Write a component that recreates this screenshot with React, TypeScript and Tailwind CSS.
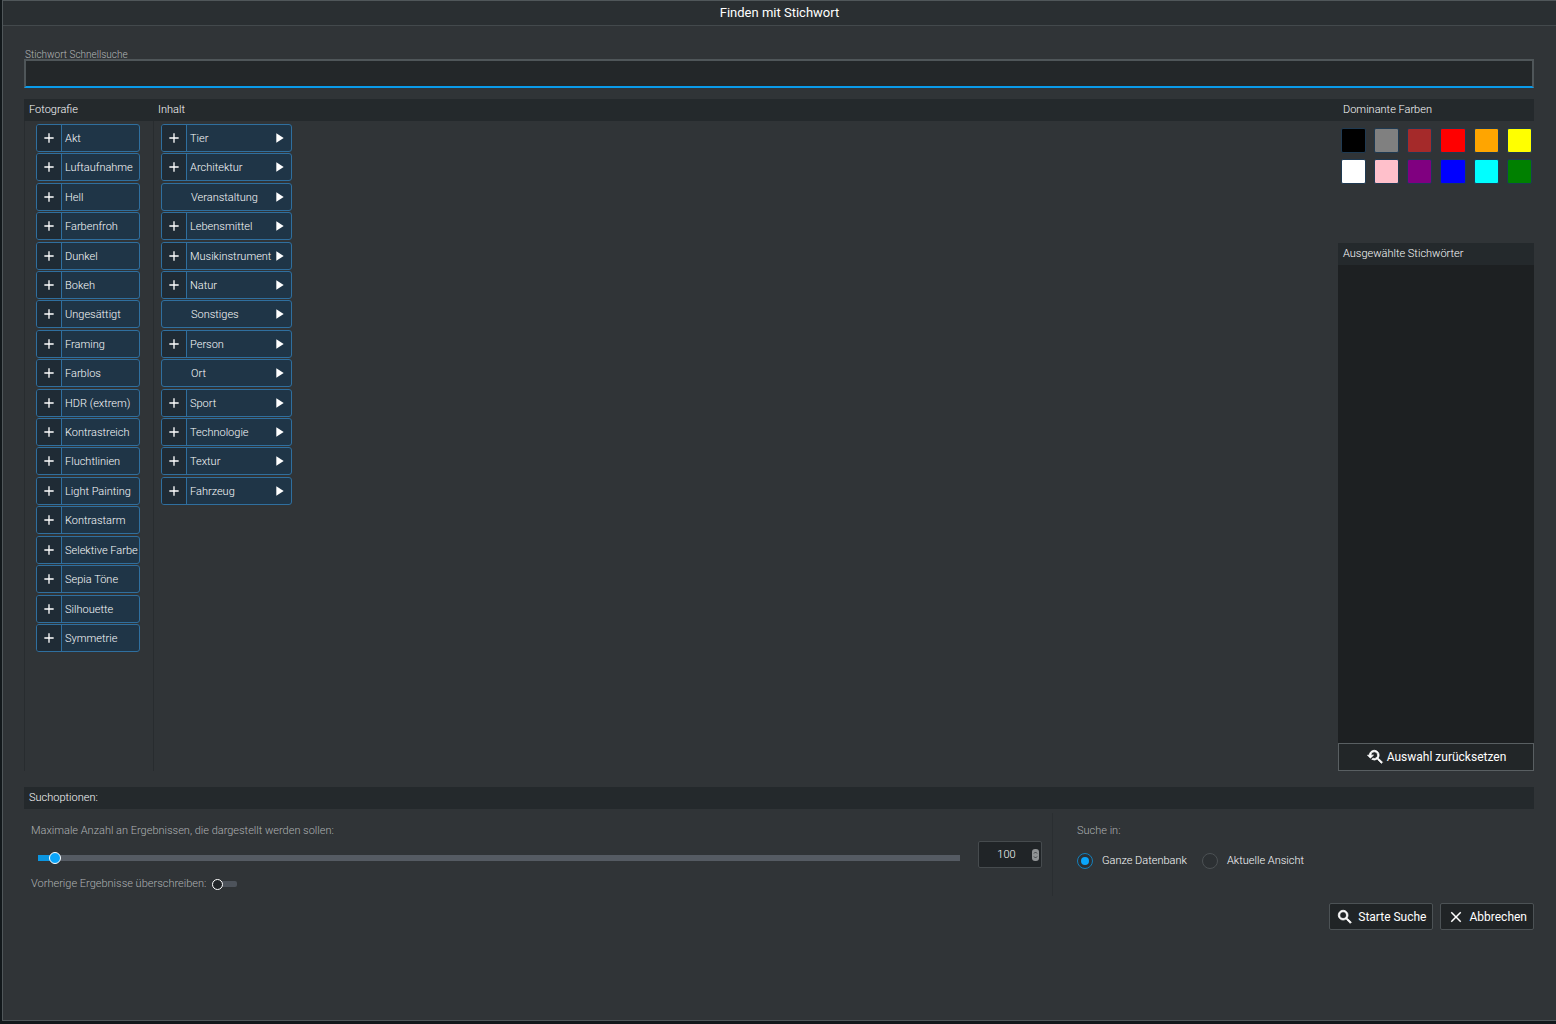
import { useState } from 'react';
import { MdAdd, MdClose, MdPlayArrow, MdSearch, MdYoutubeSearchedFor } from 'react-icons/md';

const photography = [
  'Akt',
  'Luftaufnahme',
  'Hell',
  'Farbenfroh',
  'Dunkel',
  'Bokeh',
  'Ungesättigt',
  'Framing',
  'Farblos',
  'HDR (extrem)',
  'Kontrastreich',
  'Fluchtlinien',
  'Light Painting',
  'Kontrastarm',
  'Selektive Farbe',
  'Sepia Töne',
  'Silhouette',
  'Symmetrie',
];

const content = [
  { name: 'Tier', addable: true },
  { name: 'Architektur', addable: true },
  { name: 'Veranstaltung', addable: false },
  { name: 'Lebensmittel', addable: true },
  { name: 'Musikinstrument', addable: true },
  { name: 'Natur', addable: true },
  { name: 'Sonstiges', addable: false },
  { name: 'Person', addable: true },
  { name: 'Ort', addable: false },
  { name: 'Sport', addable: true },
  { name: 'Technologie', addable: true },
  { name: 'Textur', addable: true },
  { name: 'Fahrzeug', addable: true },
];

const colors = [
  { name: 'Schwarz', className: 'bg-[#000000]' },
  { name: 'Grau', className: 'bg-[#808080]' },
  { name: 'Braun', className: 'bg-[#a52a2a]' },
  { name: 'Rot', className: 'bg-[#ff0000]' },
  { name: 'Orange', className: 'bg-[#ffa500]' },
  { name: 'Gelb', className: 'bg-[#ffff00]' },
  { name: 'Weiß', className: 'bg-[#ffffff]' },
  { name: 'Rosa', className: 'bg-[#ffc0cb]' },
  { name: 'Lila', className: 'bg-[#800080]' },
  { name: 'Blau', className: 'bg-[#0000ff]' },
  { name: 'Cyan', className: 'bg-[#00ffff]' },
  { name: 'Grün', className: 'bg-[#008000]' },
];

const MAX_RESULTS = 8000;

type KeywordProps = {
  name: string;
  addable?: boolean;
  expandable?: boolean;
};

function Keyword({ name, addable = true, expandable = false }: KeywordProps) {
  return (
    <li className="flex h-7 overflow-hidden rounded-[3px] border border-[#2f6f9f] bg-[#1f3547]">
      {addable && (
        <button
          type="button"
          aria-label={`${name} hinzufügen`}
          className="flex w-[25px] shrink-0 items-center justify-center border-r border-[#2f6f9f] bg-[#1f2b35] text-white"
        >
          <MdAdd size={16} />
        </button>
      )}
      <button
        type="button"
        className={`flex flex-1 items-center justify-between whitespace-nowrap text-[#fafbfc] ${addable ? 'pl-[3px]' : 'pl-[29px]'}`}
      >
        <span className="pt-0.5">{name}</span>
        {expandable && <MdPlayArrow size={16} className="mr-1 text-white" />}
      </button>
    </li>
  );
}

function PanelTitle({ children }: { children: string }) {
  return <h2 className="h-[22px] bg-[#24292c] pl-[5px] leading-[22px] text-[#fafbfc]">{children}</h2>;
}

export default function App() {
  const [max, setMax] = useState(100);
  const [overwrite, setOverwrite] = useState(false);
  const [scope, setScope] = useState('all');
  const fill = 1 + (max / MAX_RESULTS) * 98;

  return (
    <div className="min-h-screen bg-[#12181b] pb-[3px] pl-[2px] font-[Roboto,sans-serif] text-[11px] leading-4 font-light text-[#fafbfc]">
      <form
        className="flex min-h-[calc(100vh-3px)] flex-col border-t border-b border-l border-[#50575a] bg-[#303437]"
        onSubmit={(e) => e.preventDefault()}
      >
        <h1 className="h-[25px] border-b border-[#43494c] bg-[#2a2f32] text-center text-[13px] leading-6 font-normal text-white">
          Finden mit Stichwort
        </h1>

        <div className="flex flex-1 flex-col pt-5 pr-[22px] pb-[90px] pl-[21px]">
          <label htmlFor="quick" className="h-[13px] pl-px text-[10px] leading-[18px] text-[#b4b7b9]">
            Stichwort Schnellsuche
          </label>
          <input
            id="quick"
            type="text"
            className="h-[29px] w-full border-2 border-[#4f5659] border-b-[#0a9bea] bg-[#232729] px-2 text-[13px] outline-none"
          />

          <div className="mt-[11px] flex flex-1">
            <section className="w-[129px] shrink-0">
              <PanelTitle>Fotografie</PanelTitle>
              <div className="h-[calc(100%-22px)] border-l border-[#282c2f] pt-[3px] pr-[13px] pl-[11px]">
                <ul className="flex min-h-[528px] flex-col justify-between">
                  {photography.map((name) => (
                    <Keyword key={name} name={name} />
                  ))}
                </ul>
              </div>
            </section>

            <section className="flex-1">
              <PanelTitle>Inhalt</PanelTitle>
              <div className="h-[calc(100%-22px)] border-l border-[#282c2f] pt-[3px] pl-[7px]">
                <ul className="flex min-h-[381px] w-[131px] flex-col justify-between">
                  {content.map((item) => (
                    <Keyword key={item.name} name={item.name} addable={item.addable} expandable />
                  ))}
                </ul>
              </div>
            </section>

            <aside className="flex w-[196px] shrink-0 flex-col">
              <PanelTitle>Dominante Farben</PanelTitle>
              <div className="grid grid-cols-6 gap-x-2 gap-y-[6px] pt-[7px] pr-[2px] pl-[3px]">
                {colors.map((color) => (
                  <button
                    key={color.name}
                    type="button"
                    aria-label={color.name}
                    className={`h-[25px] rounded-xs border border-[#1f3a52] ${color.className}`}
                  />
                ))}
              </div>
              <div className="mt-[59px] flex flex-1 flex-col">
                <PanelTitle>Ausgewählte Stichwörter</PanelTitle>
                <div className="flex-1 bg-[#1d2022]" />
                <button
                  type="button"
                  className="flex h-7 items-center justify-center gap-[3px] border border-[#595f62] bg-[#222628] text-xs font-normal text-white"
                >
                  <MdYoutubeSearchedFor size={18} className="[&>path:last-child]:stroke-1" />
                  Auswahl zurücksetzen
                </button>
              </div>
            </aside>
          </div>

          <div className="mt-4">
            <PanelTitle>Suchoptionen:</PanelTitle>
          </div>
          <div className="mt-1 flex h-[83px]">
            <div className="flex-1 pt-[10px] pl-[7px]">
              <label htmlFor="max" className="block text-[#aeb1b3]">
                Maximale Anzahl an Ergebnissen, die dargestellt werden sollen:
              </label>
              <div className="flex h-[30px] items-center gap-[18px] pr-[10px] pl-[7px]">
                <input
                  id="max"
                  type="range"
                  min={0}
                  max={MAX_RESULTS}
                  value={max}
                  onChange={(e) => setMax(Number(e.target.value))}
                  className="mt-2 h-[6px] flex-1 appearance-none bg-[#555b63] [&::-webkit-slider-thumb]:size-3 [&::-webkit-slider-thumb]:appearance-none [&::-webkit-slider-thumb]:rounded-full [&::-webkit-slider-thumb]:border [&::-webkit-slider-thumb]:border-white [&::-webkit-slider-thumb]:bg-[#0aa5fa]"
                  style={{ backgroundImage: `linear-gradient(to right, #0a95e0 ${fill}%, transparent ${fill}%)` }}
                />
                <div className="relative">
                  <input
                    type="number"
                    aria-label="Anzahl"
                    value={max}
                    onChange={(e) => setMax(Number(e.target.value))}
                    className="block h-[27px] w-16 appearance-none rounded-xs border border-[#464b4e] bg-[#202427] pt-px pr-[7px] text-center [appearance:textfield] [&::-webkit-inner-spin-button]:appearance-none"
                  />
                  <svg viewBox="0 0 7 12" className="absolute top-2 right-[3px] h-3 w-[7px]" aria-hidden="true">
                    <rect width="7" height="12" rx="3" fill="#8f9294" />
                    <path d="M2 4.5 3.5 3 5 4.5M2 7.5 3.5 9 5 7.5" fill="none" stroke="#3a3e41" />
                  </svg>
                </div>
              </div>
              <label className="flex h-[30px] items-center gap-[6px] text-[#aeb1b3]">
                Vorherige Ergebnisse überschreiben:
                <input
                  type="checkbox"
                  role="switch"
                  checked={overwrite}
                  onChange={(e) => setOverwrite(e.target.checked)}
                  className="flex h-[6px] w-[25px] appearance-none items-center rounded-xs bg-[#4d535b] before:size-[11px] before:shrink-0 before:rounded-full before:border before:border-white before:bg-[#202427] checked:justify-end checked:before:bg-[#0aa5fa]"
                />
              </label>
            </div>

            <fieldset className="w-[482px] border-l border-[#2a2e31] pt-[10px] pl-6">
              <legend className="float-left w-full text-[#aeb1b3]">Suche in:</legend>
              <div className="clear-both flex gap-[15px] pt-[14px]">
                {[
                  { id: 'all', text: 'Ganze Datenbank' },
                  { id: 'view', text: 'Aktuelle Ansicht' },
                ].map((option) => (
                  <label key={option.id} className="flex items-center gap-[9px]">
                    <input
                      type="radio"
                      name="scope"
                      checked={scope === option.id}
                      onChange={() => setScope(option.id)}
                      className="flex size-4 appearance-none items-center justify-center rounded-full border border-[#4c5154] bg-[#2c3033] before:size-2 before:rounded-full checked:border-[#1580bb] checked:before:bg-[#0aa5fa]"
                    />
                    {option.text}
                  </label>
                ))}
              </div>
            </fieldset>
          </div>

          <div className="mt-[7px] flex justify-end gap-[7px] text-xs font-normal text-white">
            <button
              type="submit"
              className="flex h-[27px] items-center gap-1 rounded-xs border border-[#4c5255] bg-[#202426] px-[6px]"
            >
              <MdSearch size={18} className="[&>path:last-child]:stroke-1" />
              Starte Suche
            </button>
            <button
              type="button"
              className="flex h-[27px] items-center gap-1 rounded-xs border border-[#4c5255] bg-[#202426] px-[6px]"
            >
              <MdClose size={18} />
              Abbrechen
            </button>
          </div>
        </div>
      </form>
    </div>
  );
}
